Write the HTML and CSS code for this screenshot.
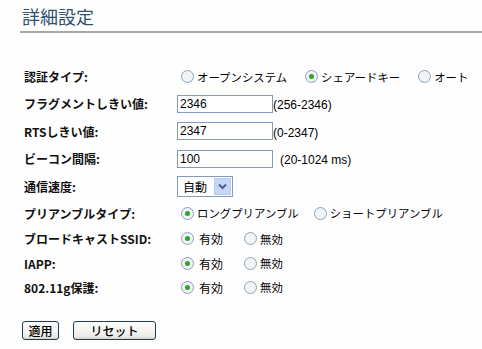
FILE: index.html
```html
<html lang="ja">
<head>
    <meta charset="UTF-8">
    <title>詳細設定</title>
    <link rel="stylesheet" href="styles.css">
</head>
<body>
    <header class="title">
        <h2>詳細設定</h2>
    </header>
    <form class="settings">
        <div class="row r27">
            <label class="name">認証タイプ:</label>
            <div class="field">
                <span class="opt"><input type="radio" name="auth">オープンシステム</span>
                <span class="opt"><input type="radio" name="auth" checked>シェアードキー</span>
                <span class="opt"><input type="radio" name="auth">オート</span>
            </div>
        </div>
        <div class="row r27">
            <label class="name">フラグメントしきい値:</label>
            <div class="field"><input type="text" class="txt" value="2346"><span class="hint">(256-2346)</span></div>
        </div>
        <div class="row r28">
            <label class="name">RTSしきい値:</label>
            <div class="field"><input type="text" class="txt" value="2347"><span class="hint">(0-2347)</span></div>
        </div>
        <div class="row r27">
            <label class="name">ビーコン間隔:</label>
            <div class="field"><input type="text" class="txt" value="100"><span class="hint gap">(20-1024 ms)</span></div>
        </div>
        <div class="row r28">
            <label class="name">通信速度:</label>
            <div class="field">
                <div class="select">
                    <span class="sel-val">自動</span>
                    <span class="sel-btn">
                        <svg width="9" height="7" viewBox="0 0 9 7"><path d="M1 1.5 L4.5 5 L8 1.5" fill="none" stroke="#4d6185" stroke-width="2"/></svg>
                    </span>
                </div>
            </div>
        </div>
        <div class="row r26">
            <label class="name">プリアンブルタイプ:</label>
            <div class="field">
                <span class="opt pre"><input type="radio" name="pre" checked>ロングプリアンブル</span>
                <span class="opt"><input type="radio" name="pre">ショートプリアンブル</span>
            </div>
        </div>
        <div class="row r25">
            <label class="name">ブロードキャストSSID:</label>
            <div class="field">
                <span class="opt sm"><input type="radio" name="ssid" checked>有効</span>
                <span class="opt"><input type="radio" name="ssid">無効</span>
            </div>
        </div>
        <div class="row r24">
            <label class="name">IAPP:</label>
            <div class="field">
                <span class="opt sm"><input type="radio" name="iapp" checked>有効</span>
                <span class="opt"><input type="radio" name="iapp">無効</span>
            </div>
        </div>
        <div class="row r24">
            <label class="name">802.11g保護:</label>
            <div class="field">
                <span class="opt sm"><input type="radio" name="prot" checked>有効</span>
                <span class="opt"><input type="radio" name="prot">無効</span>
            </div>
        </div>
        <div class="buttons">
            <input type="button" class="btn" value="適用">
            <input type="button" class="btn wide" value="リセット">
        </div>
    </form>
</body>
</html>
```

FILE: styles.css
```css
*{
    box-sizing: border-box;
    margin: 0;
}
body{
    background: #fefefe;
    font-family: "Liberation Sans", "Noto Sans CJK JP", sans-serif;
    font-size: 12px;
    color: #000;
}
.title{
    padding: 4px 0 0 20px;
}
.title h2{
    font-family: "Noto Sans CJK JP", sans-serif;
    font-weight: normal;
    font-size: 18px;
    line-height: 24px;
    color: #33506f;
    padding: 0 0 3px 2px;
    border-bottom: 2px solid #a9a9a4;
}
.settings{
    padding: 30px 0 0 24px;
}
.row{
    display: flex;
    align-items: center;
}
.r24{ height: 24px; }
.r25{ height: 25px; }
.r26{ height: 26px; }
.r27{ height: 27px; }
.r28{ height: 28px; }
.name{
    width: 153px;
    flex-shrink: 0;
    font-family: "Noto Sans CJK JP", sans-serif;
    font-weight: bold;
    font-size: 12px;
    color: #111;
}
.field{
    display: flex;
    align-items: center;
    font-family: "Noto Sans CJK JP", sans-serif;
}
.opt{
    display: flex;
    align-items: center;
    margin-right: 14px;
    white-space: nowrap;
    font-size: 11.4px;
}
.opt.pre{
    margin-right: 11px;
}
.opt.sm{
    margin-right: 17px;
    font-size: 12px;
}
.opt input{
    appearance: none;
    width: 13px;
    height: 13px;
    margin: 0 3px 0 4px;
    border: 1px solid #8aa2bf;
    border-radius: 50%;
    background: #f1f3f4;
    display: inline-flex;
    align-items: center;
    justify-content: center;
}
.sm input{
    margin-right: 5px;
}
.opt input:checked::after{
    content: "";
    width: 5px;
    height: 5px;
    border-radius: 50%;
    background: #2da62d;
}
.txt{
    width: 96px;
    height: 18px;
    border: 1px solid #7f9db9;
    padding: 0 2px;
    font-family: "Liberation Sans", sans-serif;
    font-size: 12px;
    outline: none;
}
.hint{
    font-family: "Liberation Sans", sans-serif;
    font-size: 12px;
    padding-top: 3px;
}
.hint.gap{
    margin-left: 7px;
}
.select{
    display: flex;
    align-items: center;
    width: 56px;
    height: 21px;
    border: 1px solid #7f9db9;
    background: #fff;
    padding: 1px;
}
.sel-val{
    flex: 1;
    padding-left: 4px;
    font-size: 12px;
}
.sel-btn{
    width: 17px;
    height: 17px;
    background: #c6d6f6;
    border: 1px solid #b8cbee;
    display: flex;
    align-items: center;
    justify-content: center;
}
.buttons{
    display: flex;
    gap: 14px;
    padding: 22px 0 0 0;
    margin-left: -2px;
}
.btn{
    height: 19px;
    width: 37px;
    border: 1px solid #1e3a5e;
    border-radius: 3px;
    background: linear-gradient(#ffffff, #ecebe6 85%, #d6d0c5);
    font-family: "Noto Sans CJK JP", sans-serif;
    font-size: 12px;
    font-weight: 500;
    color: #000;
    padding: 0;
    line-height: 15px;
}
.btn.wide{
    width: 83px;
}
```
